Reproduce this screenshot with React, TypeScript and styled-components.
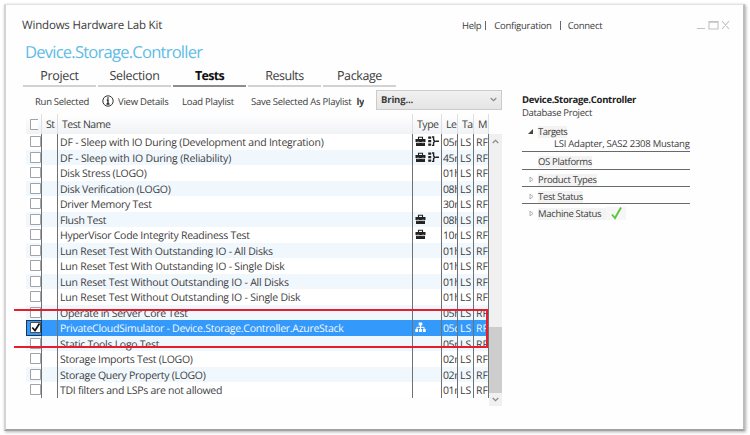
import React from 'react';
import styled, { createGlobalStyle, css } from 'styled-components';

const Global = createGlobalStyle`
  * { box-sizing: border-box; }
  body { margin: 0; background: #fff; color: #3c3c3c; font-family: 'Open Sans', 'Noto Sans', sans-serif; text-rendering: geometricPrecision; overflow: hidden; }
`;

const Stage = styled.div`
  width: 750px; height: 435px; padding: 4px 5px 4px 4px; display: flex;
`;
const Window = styled.main`
  flex: 1; position: relative; background: #fefefe;
  border: 1px solid #e2e2e2; border-left: 2px solid #d4d4d4;
  border-right: 2px solid #bcbcbc; border-bottom: 2px solid #a2a2a2;
  box-shadow: 1px 1px 3px rgba(0,0,0,.32);
  padding: 12px 12px 0 16px; display: flex; flex-direction: column;
`;
const Label = styled.span<{ $ls?: number }>`
  white-space: pre; letter-spacing: ${p => p.$ls ?? -0.28}px;
`;
const TitleBar = styled.header`
  height: 16px; display: flex; align-items: center; font-size: 9.5px;
`;
const AppName = styled(Label)`font-size: 11.5px; width: 440px;`;
const Links = styled.nav`display: flex; align-items: center; width: 234px;`;
const Separator = styled.i<{ $l: number; $r: number }>`
  width: 1px; height: 9px; background: #666; margin: 1px ${p => p.$r}px 0 ${p => p.$l}px;
`;
const Heading = styled.h1`
  margin: 6px 0 0 3px; height: 28px; line-height: 26px; font-size: 16.6px; font-weight: 400;
  letter-spacing: -0.79px; color: #5fbce6; white-space: nowrap;
`;
const Columns = styled.div`display: flex; flex: 1;`;
const Left = styled.section`width: 480px;`;
const Tabs = styled.div`display: flex; gap: 2px; padding-left: 1px; height: 21px;`;
const Tab = styled.div<{ $active?: boolean; $ls: number }>`
  width: 73px; height: 20px; line-height: 17px; text-align: center; font-size: 12.5px;
  letter-spacing: ${p => p.$ls}px; border-bottom: 2px solid #d2d2d2;
  ${p => p.$active && css`font-weight: 700; color: #111; border-color: #8d8d8d;`}
`;
const Toolbar = styled.div`
  display: flex; align-items: center; height: 25px; margin-top: 1px; padding-left: 13px; font-size: 9.5px;
`;
const Action = styled(Label)<{ $w: number }>`width: ${p => p.$w}px; flex: none;`;
const InfoIcon = styled.svg`width: 12px; height: 12px; margin: 0 4px 1px 0; flex: none;`;
const ClippedLabel = styled.b`
  width: 8px; height: 14px; line-height: 14px; overflow: hidden; margin-right: 12px; display: flex; justify-content: flex-end; letter-spacing: -.4px;
`;
const Combo = styled.div`
  width: 126px; height: 20px; margin-bottom: 3px; border: 1px solid #cbcbcb; background: linear-gradient(#f1f1f1, #e5e5e5);
  display: flex; align-items: center; justify-content: space-between; padding: 0 4px 2px; font-weight: 700;
`;
const Arrow = styled.svg`width: 7px; height: 5px; flex: none; fill: none; stroke: #888; stroke-width: 1.2;`;

const TableWrap = styled.div`position: relative; margin-left: 4px; width: 476px; font-size: 10.5px;`;
const grid = css`display: grid; grid-template-columns: 16px 16px 355px 29px 16px 16px 15px;`;
const HeadRow = styled.div`
  ${grid}; height: 20px; width: 463px; background: linear-gradient(#fff, #f1f2f4);
`;
const HeadCell = styled.div<{ $pad?: number; $top?: number }>`
  height: 20px; line-height: 22px; padding: ${p => p.$top ?? 0}px 0 0 ${p => p.$pad ?? 4}px; white-space: nowrap; overflow: hidden;
  letter-spacing: -.45px; border-right: 1px solid #dcdee0;
`;
const TableBody = styled.div`display: flex; height: 264px;`;
const Rows = styled.div`width: 463px; height: 263.5px; display: grid; grid-template-rows: repeat(17, 15.5px);`;
const RowLine = styled.div<{ $alt: boolean; $sel: boolean }>`
  ${grid}; height: 15.5px; background: ${p => (p.$sel ? '#3399fb' : p.$alt ? '#f0f7fd' : '#fff')};
  color: ${p => (p.$sel ? '#f2f8ff' : '#3c3c3c')};
`;
const Cell = styled.div`
  border-right: 1px solid #6e7276; overflow: hidden; white-space: nowrap; line-height: 18px; min-height: 0;
  padding-left: 1px; letter-spacing: -.4px;
`;
const ShortCell = styled(Cell)`padding-left: 2px; letter-spacing: -.1px;`;
const NameCell = styled(Cell)<{ $ls: number }>`padding-left: 2px; letter-spacing: ${p => p.$ls}px;`;
const CheckCell = styled(Cell)<{ $sel?: boolean }>`
  padding: ${p => (p.$sel ? '1px 0 0 3px' : '2px 0 0 4px')};
  ${p => p.$sel && css`border: 1px solid #1d3550;`}
`;
const TypeCell = styled(Cell)`display: flex; align-items: center; gap: 2px; padding-left: 2px;`;
const Box = styled.svg`width: 11px; height: 12px; display: block;`;
const Glyph = styled.svg`width: 11px; height: 11px; flex: none; display: block;`;
const Scroll = styled.div`
  width: 13px; height: 272px; background: #f0f0f0; display: flex; flex-direction: column; align-items: center;
  padding: 5px 0 4px; justify-content: space-between;
`;
const Thumb = styled.div`width: 13px; height: 66px; flex: none; background: #cdcdcd; margin: auto 0 4px;`;
const Highlight = styled.div`
  position: absolute; left: -12px; top: 195px; width: 474px; height: 39px;
  border: 2px solid #e91c2b; border-left: 0;
`;

const Side = styled.aside`width: 168px; margin-left: 20px; padding-top: 26px; font-size: 9.5px; line-height: 13px;`;
const ProjectName = styled.div`font-weight: 700; color: #222; letter-spacing: -.29px; white-space: nowrap;`;
const Kind = styled.div`letter-spacing: -.33px; margin-bottom: 1px;`;
const Group = styled.div<{ $h: number; $top?: number; $last?: boolean }>`
  height: ${p => p.$h}px; padding-top: ${p => p.$top ?? 3}px; border-bottom: ${p => (p.$last ? '0' : '1px solid #6a6a6a')};
`;
const GroupLine = styled.div`display: flex; align-items: center; height: 13px;`;
const Twisty = styled.svg`width: 16px; height: 9px; flex: none; fill: none; stroke: #b0b0b0;`;
const GroupName = styled(Label)`background: #f3f3f3; line-height: 12px;`;
const Child = styled.div`padding-left: 32px; letter-spacing: -.24px; white-space: nowrap; line-height: 12px;`;
const Tick = styled.svg`width: 20px; height: 13px; background: #f6f6f6;`;
const Controls = styled.svg`width: 34px; height: 12px; fill: none; stroke: #c2c2c2; stroke-width: 1.1;`;

function CheckBox({ checked, open }: { checked?: boolean; open?: boolean }) {
  return (
    <Box viewBox="0 0 11 12">
      <path d={open ? 'M8 .5H.5v10H8' : 'M10.5 .5H.5v10H10.5z'} fill="#fff" stroke={checked ? '#444' : '#96999c'} strokeWidth=".9" />
      {checked && <path d="M2.3 5.5 5 8.5 9.5 1.5" fill="none" stroke="#111" strokeWidth="1.7" />}
    </Box>
  );
}
function Toolbox() {
  return (
    <Glyph viewBox="0 0 11 11">
      <path d="M3.5 3V1.3h4V3" fill="none" stroke="#222" strokeWidth="1.1" />
      <path d="M.5 3h10v3H.5zM1 6.8h9V10H1z" fill="#222" />
      <path d="M3 5.2v2.2M8 5.2v2.2" stroke="#bbb" strokeWidth=".8" />
    </Glyph>
  );
}
function Flow() {
  return (
    <Glyph viewBox="0 0 11 11">
      <path d="M.2.5h3v2.3h-3zM.2 4h3v2.3h-3zM.2 7.5h3v2.3h-3z" fill="#222" />
      <path d="M4 1h1.6v3l1.4 1.2-1.4 1.2v3H4M7.8 5.2H11" fill="none" stroke="#222" strokeWidth="1.4" />
    </Glyph>
  );
}
function Network() {
  return (
    <Glyph viewBox="0 0 11 11">
      <path d="M3.7.5h3.6v3H3.7zM.3 7h2.8v3H.3zM4.1 7h2.8v3H4.1zM7.9 7h2.8v3H7.9z" fill="#fff" />
      <path d="M5.5 3v4M1.9 7V5.3h7.2V7" fill="none" stroke="#fff" />
    </Glyph>
  );
}

type Test = { name: string; len: string; ls: number; icons?: 'tool' | 'flow' | 'net'; selected?: boolean };
const tests: Test[] = [
  { name: 'DF - Sleep with IO During (Development and Integration)', len: '05m', ls: -0.205, icons: 'flow' },
  { name: 'DF - Sleep with IO During (Reliability)', len: '45m', ls: -0.17, icons: 'flow' },
  { name: 'Disk Stress (LOGO)', len: '01h', ls: -0.28 },
  { name: 'Disk Verification (LOGO)', len: '08h', ls: -0.28 },
  { name: 'Driver Memory Test', len: '30m', ls: -0.28 },
  { name: 'Flush Test', len: '08h', ls: -0.28, icons: 'tool' },
  { name: 'HyperVisor Code Integrity Readiness Test', len: '10m', ls: -0.28, icons: 'tool' },
  { name: 'Lun Reset Test With Outstanding IO - All Disks', len: '01h', ls: -0.22 },
  { name: 'Lun Reset Test With Outstanding IO - Single Disk', len: '01h', ls: -0.22 },
  { name: 'Lun Reset Test Without Outstanding IO - All Disks', len: '01h', ls: -0.22 },
  { name: 'Lun Reset Test Without Outstanding IO - Single Disk', len: '01h', ls: -0.22 },
  { name: 'Operate in Server Core Test', len: '05h', ls: -0.28 },
  { name: 'PrivateCloudSimulator - Device.Storage.Controller.AzureStack', len: '05d', ls: -0.275, selected: true, icons: 'net' },
  { name: 'Static Tools Logo Test', len: '05m', ls: -0.28 },
  { name: 'Storage Imports Test (LOGO)', len: '02m', ls: -0.28 },
  { name: 'Storage Query Property (LOGO)', len: '02m', ls: -0.29 },
  { name: 'TDI filters and LSPs are not allowed', len: '01m', ls: -0.28 },
];

function TestRow({ test, index }: { test: Test; index: number }) {
  return (
    <RowLine $alt={index % 2 === 1} $sel={!!test.selected}>
      <CheckCell $sel={test.selected}><CheckBox checked={test.selected} /></CheckCell>
      <Cell />
      <NameCell $ls={test.ls}>{test.name}</NameCell>
      <TypeCell>
        {(test.icons === 'tool' || test.icons === 'flow') && <Toolbox />}
        {test.icons === 'flow' && <Flow />}
        {test.icons === 'net' && <Network />}
      </TypeCell>
      <Cell>{test.len}</Cell>
      <ShortCell>LS</ShortCell>
      <ShortCell>RF</ShortCell>
    </RowLine>
  );
}

export default function App() {
  return (
    <Stage>
      <Global />
      <Window>
        <TitleBar>
          <AppName $ls={-0.18}>Windows Hardware Lab Kit</AppName>
          <Links>
            <Label $ls={-0.35}>Help</Label><Separator $l={4} $r={8} />
            <Label $ls={-0.24}>Configuration</Label><Separator $l={8} $r={7} />
            <Label>Connect</Label>
          </Links>
          <Controls viewBox="0 0 34 12"><path d="M1 9.5h8M13 2.5h9v7.5h-9zM13 3.2h9M26 2l7 8M33 2l-7 8" /></Controls>
        </TitleBar>
        <Heading>Device.Storage.Controller</Heading>
        <Columns>
          <Left>
            <Tabs>
              <Tab $ls={-0.32}>Project</Tab>
              <Tab $ls={-0.31}>Selection</Tab>
              <Tab $ls={-0.69} $active>Tests</Tab>
              <Tab $ls={-0.48}>Results</Tab>
              <Tab $ls={-0.4}>Package</Tab>
            </Tabs>
            <Toolbar>
              <Action $w={67}>Run Selected</Action>
              <InfoIcon viewBox="0 0 12 12">
                <circle cx="6" cy="6" r="5.2" fill="none" stroke="#333" />
                <path d="M6 2.3v1.5M4.8 5H6v4M4.5 9h3" fill="none" stroke="#222" strokeWidth="1.3" />
              </InfoIcon>
              <Action $w={64} $ls={-0.24}>View Details</Action>
              <Action $w={69} $ls={-0.24}>Load Playlist</Action>
              <Action $w={105} $ls={-0.25}>Save Selected As Playlist</Action>
              <ClippedLabel>ly</ClippedLabel>
              <Combo><Label $ls={-0.16}>Bring...</Label><Arrow viewBox="0 0 7 5"><path d="m.7 1 2.8 2.7L6.3 1" /></Arrow></Combo>
            </Toolbar>
            <TableWrap>
              <HeadRow>
                <HeadCell $pad={4} $top={5}><CheckBox open /></HeadCell>
                <HeadCell>St</HeadCell>
                <HeadCell>Test Name</HeadCell>
                <HeadCell>Type</HeadCell>
                <HeadCell>Le</HeadCell>
                <HeadCell>Ta</HeadCell>
                <HeadCell>M</HeadCell>
              </HeadRow>
              <TableBody>
                <Rows>{tests.map((t, i) => <TestRow key={t.name} test={t} index={i} />)}</Rows>
                <Scroll>
                  <Arrow viewBox="0 0 7 5"><path d="M.7 4 3.5 1.3 6.3 4" /></Arrow>
                  <Thumb />
                  <Arrow viewBox="0 0 7 5"><path d="m.7 1 2.8 2.7L6.3 1" /></Arrow>
                </Scroll>
              </TableBody>
              <Highlight />
            </TableWrap>
          </Left>
          <Side>
            <ProjectName>Device.Storage.Controller</ProjectName>
            <Kind>Database Project</Kind>
            <Group $h={32} $top={5}>
              <GroupLine><Twisty viewBox="0 0 16 9"><path d="M11 2v5H6z" fill="#444" stroke="none" /></Twisty><GroupName $ls={-0.5}>Targets</GroupName></GroupLine>
              <Child>LSI Adapter, SAS2 2308 Mustang</Child>
            </Group>
            <Group $h={18}><GroupLine><Twisty /><GroupName $ls={-0.33}>OS Platforms</GroupName></GroupLine></Group>
            {['Product Types', 'Test Status', 'Machine Status'].map((n, i) => (
              <Group key={n} $h={17} $last={i === 2}>
                <GroupLine>
                  <Twisty viewBox="0 0 16 9"><path d="M8 2v5l3-2.5z" /></Twisty>
                  <GroupName $ls={-0.33}>{n}{i === 2 ? '  ' : ''}</GroupName>
                  {i === 2 && <Tick viewBox="0 0 20 13"><path d="m6 7.5 3 3.5L15 .5" fill="none" stroke="#5bc63c" strokeWidth="1.9" /></Tick>}
                </GroupLine>
              </Group>
            ))}
          </Side>
        </Columns>
      </Window>
    </Stage>
  );
}
